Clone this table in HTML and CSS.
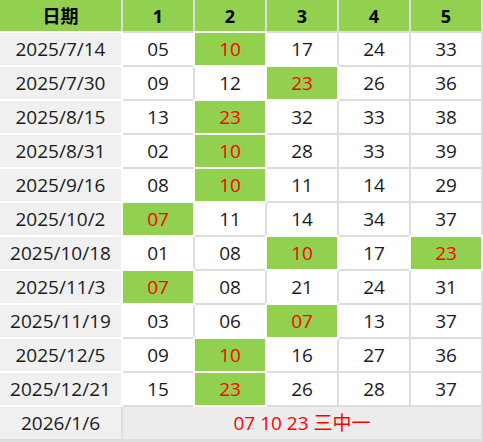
FILE: index.html
```html
<!DOCTYPE html>
<html lang="zh">
<head>
<meta charset="utf-8">
<title>号码表</title>
<link rel="stylesheet" href="styles.css">
</head>
<body>
<div class="grid">
  <div class="cell head">日期</div>
  <div class="cell head">1</div>
  <div class="cell head">2</div>
  <div class="cell head">3</div>
  <div class="cell head">4</div>
  <div class="cell head">5</div>

  <div class="cell date">2025/7/14</div>
  <div class="cell">05</div><div class="cell hit">10</div><div class="cell">17</div><div class="cell">24</div><div class="cell">33</div>

  <div class="cell date">2025/7/30</div>
  <div class="cell">09</div><div class="cell">12</div><div class="cell hit">23</div><div class="cell">26</div><div class="cell">36</div>

  <div class="cell date">2025/8/15</div>
  <div class="cell">13</div><div class="cell hit">23</div><div class="cell">32</div><div class="cell">33</div><div class="cell">38</div>

  <div class="cell date">2025/8/31</div>
  <div class="cell">02</div><div class="cell hit">10</div><div class="cell">28</div><div class="cell">33</div><div class="cell">39</div>

  <div class="cell date">2025/9/16</div>
  <div class="cell">08</div><div class="cell hit">10</div><div class="cell">11</div><div class="cell">14</div><div class="cell">29</div>

  <div class="cell date">2025/10/2</div>
  <div class="cell hit">07</div><div class="cell">11</div><div class="cell">14</div><div class="cell">34</div><div class="cell">37</div>

  <div class="cell date">2025/10/18</div>
  <div class="cell">01</div><div class="cell">08</div><div class="cell hit">10</div><div class="cell">17</div><div class="cell hit">23</div>

  <div class="cell date">2025/11/3</div>
  <div class="cell hit">07</div><div class="cell">08</div><div class="cell">21</div><div class="cell">24</div><div class="cell">31</div>

  <div class="cell date">2025/11/19</div>
  <div class="cell">03</div><div class="cell">06</div><div class="cell hit">07</div><div class="cell">13</div><div class="cell">37</div>

  <div class="cell date">2025/12/5</div>
  <div class="cell">09</div><div class="cell hit">10</div><div class="cell">16</div><div class="cell">27</div><div class="cell">36</div>

  <div class="cell date">2025/12/21</div>
  <div class="cell">15</div><div class="cell hit">23</div><div class="cell">26</div><div class="cell">28</div><div class="cell">37</div>

  <div class="cell date last">2026/1/6</div>
  <div class="cell foot">07 10 23 三中一</div>
</div>
</body>
</html>
```

FILE: styles.css
```css
html, body {
  margin: 0;
  padding: 0;
  background: #ffffff;
}

.grid {
  display: grid;
  grid-template-columns: 121px repeat(5, 70px);
  grid-template-rows: 31px repeat(12, 32px);
  gap: 2px;
  width: 481px;
  padding: 0 2px 3px 0;
  background: #dddddd;
  font-family: "Open Sans", "Noto Sans CJK SC", sans-serif;
  font-size: 19px;
  color: #1b1b1b;
}

.cell {
  display: flex;
  align-items: center;
  justify-content: center;
  background: #ffffff;
  line-height: 1;
}

.head {
  background: #92d050;
  font-weight: 700;
  font-size: 18px;
  color: #000000;
}

.date {
  background: #f0f0f0;
  box-shadow: 0 0 0 2px #ffffff;
}

.date.last {
  box-shadow: none;
}

.hit {
  background: #92d050;
  color: #ff0000;
  box-shadow: 0 0 0 2px #ffffff;
}

.foot {
  grid-column: 2 / span 5;
  background: #ececec;
  color: #ff0000;
}
```
